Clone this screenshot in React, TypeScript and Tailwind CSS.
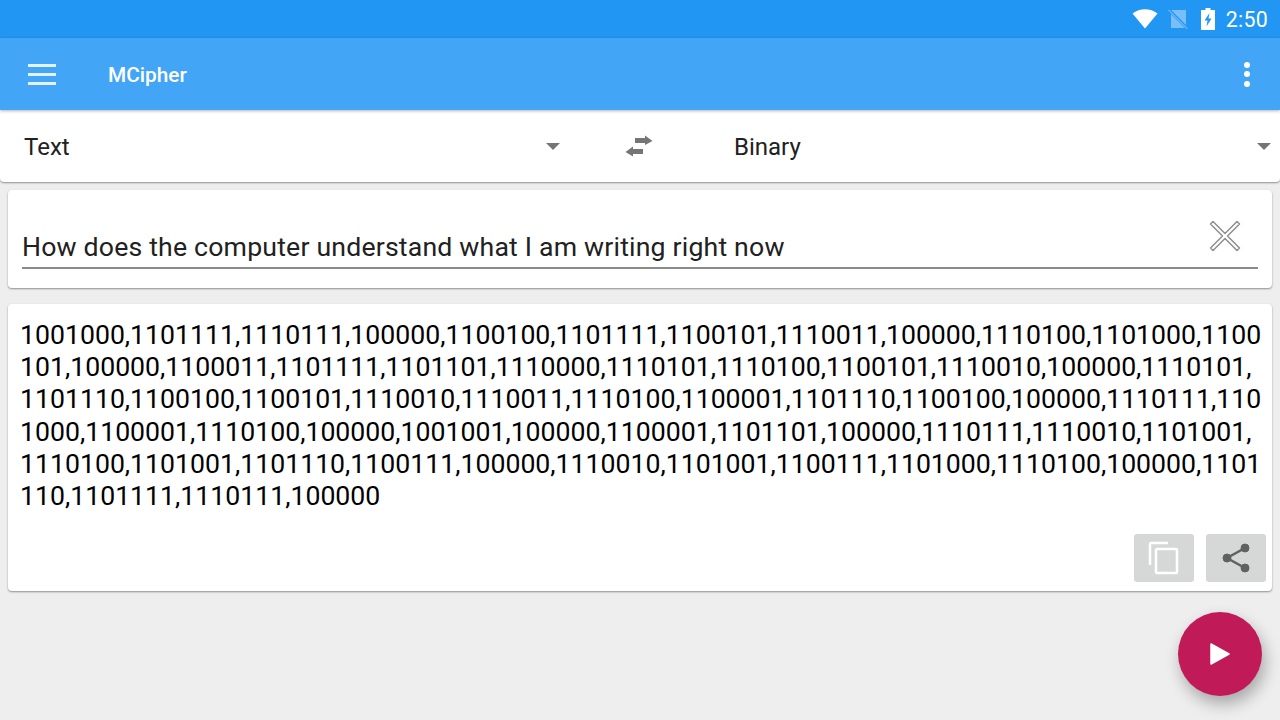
import React from "react";

const lines = [
  "1001000,1101111,1110111,100000,1100100,1101111,1100101,1110011,100000,1110100,1101000,1100",
  "101,100000,1100011,1101111,1101101,1110000,1110101,1110100,1100101,1110010,100000,1110101,",
  "1101110,1100100,1100101,1110010,1110011,1110100,1100001,1101110,1100100,100000,1110111,110",
  "1000,1100001,1110100,100000,1001001,100000,1100001,1101101,100000,1110111,1110010,1101001,",
  "1110100,1101001,1101110,1100111,100000,1110010,1101001,1100111,1101000,1110100,100000,1101",
  "110,1101111,1110111,100000",
];

const Caret = () => <div className="w-0 h-0 border-x-[7px] border-x-transparent border-t-[7px] border-t-[#757575]" />;

export default function App() {
  return (
    <div className="w-[1280px] h-[720px] overflow-hidden relative bg-[#eeeeee] font-['Roboto',sans-serif]">
      {/* status bar */}
      <div className="h-[38px] bg-[#2196f3] flex items-center justify-end pr-3 text-white">
        <svg width="26" height="20" viewBox="0 0 26 20" className="mr-[10px]">
          <path d="M0.5 4.5 C7.5 -1.2 18.5 -1.2 25.5 4.5 L13 19.5 Z" fill="white" />
        </svg>
        <svg width="20" height="20" viewBox="0 0 20 20" className="mr-[13px]">
          <path d="M3 1 H18 V19 H3 Z" fill="#90c8f8" fillOpacity="0.8" />
          <path d="M0.5 0.5 L19.5 19.5" stroke="#2196f3" strokeWidth="3" />
          <path d="M0.5 1 L19.5 20" stroke="#64b5f6" strokeWidth="1.2" />
        </svg>
        <svg width="14" height="22" viewBox="0 0 14 22" className="mr-[11px]">
          <path fillRule="evenodd" d="M4.5 0 H9.5 V2 H14 V22 H0 V2 H4.5 Z M8.5 5 L3.5 12.5 H6.5 L5.5 18.5 L10.5 10.5 H7.5 Z" fill="white" />
        </svg>
        <span className="text-[21.33px] leading-none tracking-[0.3px] mt-[1px]">2:50</span>
      </div>

      {/* app bar */}
      <div className="h-[72px] bg-[#42a5f5] flex items-center pl-7 pr-[30px] text-white relative z-10 shadow-[0_1px_3px_rgba(0,0,0,0.3)]">
        <div className="w-7 flex flex-col gap-[6px]">
          <div className="h-[3px] bg-[#e3f2fd]" />
          <div className="h-[3px] bg-[#e3f2fd]" />
          <div className="h-[3px] bg-[#e3f2fd]" />
        </div>
        <span className="ml-[52px] mt-[3px] text-[20.8px] font-medium">MCipher</span>
        <div className="ml-auto flex flex-col gap-[3.5px]">
          <div className="w-[6px] h-[6px] rounded-full bg-white" />
          <div className="w-[6px] h-[6px] rounded-full bg-white" />
          <div className="w-[6px] h-[6px] rounded-full bg-white" />
        </div>
      </div>

      {/* spinners */}
      <div className="h-[72px] bg-white rounded-b-[4px] shadow-[0_1px_2px_rgba(0,0,0,0.4)] flex items-center text-[24px] text-[#212121]">
        <span className="ml-6 w-[522px] mt-[2px]">Text</span>
        <Caret />
        <svg width="28" height="24" viewBox="0 0 28 24" className="ml-[65px]">
          <path d="M10 3 H20 V0.5 L27.5 6 L20 10 V8 H10 Z" fill="#757575" transform="translate(0 1)" />
          <path d="M18 15 H8 V12.5 L0.5 18 L8 22.5 V20 H18 Z" fill="#757575" />
        </svg>
        <span className="ml-[81px] w-[523px] mt-[2px]">Binary</span>
        <Caret />
      </div>

      {/* input card */}
      <div className="mx-2 mt-2 h-[98px] bg-white rounded-[4px] shadow-[0_1px_2px_rgba(0,0,0,0.4)] px-[14px] flex flex-col">
        <div className="mt-10 h-[39px] border-b-2 border-b-[#8a8a8a] flex items-center text-[#212121] text-[26.67px] tracking-[0.18px] leading-none justify-between">
          <span className="mb-[2px]">How does the computer understand what I am writing right now</span>
          <svg width="32" height="32" viewBox="0 0 32 32" className="mb-[25px] mr-[17px]">
            <path d="M4 1.5 L16 13.5 L28 1.5 L30.5 4 L18.5 16 L30.5 28 L28 30.5 L16 18.5 L4 30.5 L1.5 28 L13.5 16 L1.5 4 Z" fill="white" stroke="#8f8f8f" strokeWidth="1.5" strokeLinejoin="round" />
          </svg>
        </div>
      </div>

      {/* output card */}
      <div className="mx-2 mt-4 h-[287px] bg-white rounded-[4px] shadow-[0_1px_2px_rgba(0,0,0,0.4)] pl-3 pt-[15px] flex flex-col">
        <div className="text-[26.67px] leading-[32.2px] text-black whitespace-nowrap">
          {lines.map((l) => (
            <div key={l}>{l}</div>
          ))}
        </div>
        <div className="mt-auto mb-[9px] mr-[6px] flex justify-end gap-3">
          <div className="w-[60px] h-[48px] bg-[#d6d7d7] rounded-[3px] flex items-center justify-center">
            <svg width="32" height="34" viewBox="0 0 32 34" fill="none" stroke="white" strokeWidth="2.5">
              <path d="M20 2 H3 Q2 2 2 3 V24" />
              <rect x="8" y="8" width="21" height="24" rx="1" />
            </svg>
          </div>
          <div className="w-[60px] h-[48px] bg-[#d6d7d7] rounded-[3px] flex items-center justify-center">
            <svg width="30" height="32" viewBox="0 0 30 32" fill="#616161" stroke="#616161">
              <circle cx="24" cy="6" r="4" />
              <circle cx="6" cy="16" r="4" />
              <circle cx="24" cy="26" r="4" />
              <path d="M24 6 L6 16 L24 26" fill="none" strokeWidth="2.5" />
            </svg>
          </div>
        </div>
      </div>

      {/* fab */}
      <div className="absolute left-[1178px] top-[612px] w-[84px] h-[84px] rounded-full bg-[#c01a58] shadow-[3px_8px_16px_rgba(0,0,0,0.3)] flex items-center justify-center">
        <svg width="20" height="22" viewBox="0 0 20 22">
          <path d="M1 1 L19 11 L1 21 Z" fill="white" stroke="white" strokeWidth="1.5" strokeLinejoin="round" />
        </svg>
      </div>
    </div>
  );
}
